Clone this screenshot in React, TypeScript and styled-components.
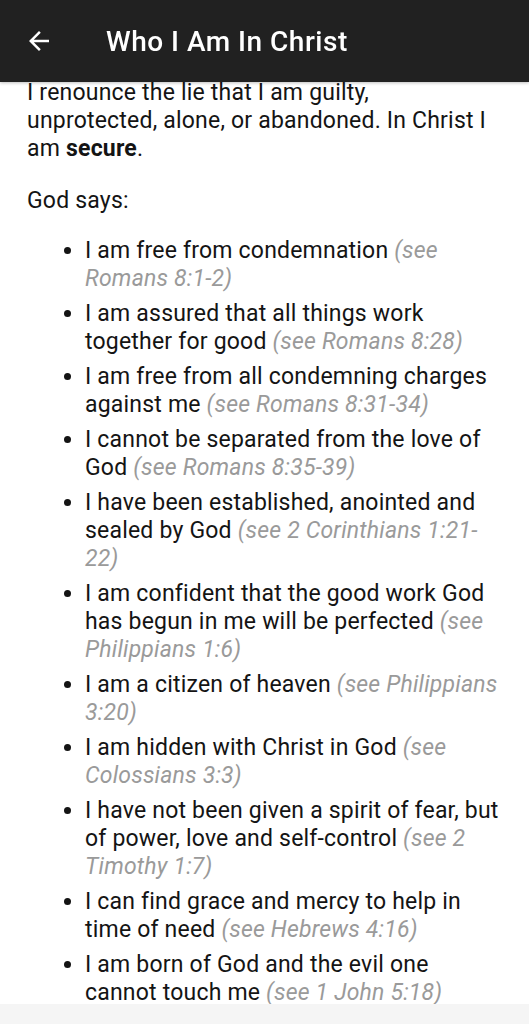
import React from 'react';
import styled, { createGlobalStyle } from 'styled-components';

const GlobalStyle = createGlobalStyle`
  html, body {
    margin: 0;
    padding: 0;
    background: #ffffff;
    font-family: Roboto, "Noto Sans", Arial, sans-serif;
  }
  body { overflow: hidden; }
`;

type Item = { text: string; cite: string };

const items: Item[] = [
  { text: 'I am free from condemnation', cite: 'see Romans 8:1-2' },
  { text: 'I am assured that all things work together for good', cite: 'see Romans 8:28' },
  { text: 'I am free from all condemning charges against me', cite: 'see Romans 8:31-34' },
  { text: 'I cannot be separated from the love of God', cite: 'see Romans 8:35-39' },
  { text: 'I have been established, anointed and sealed by God', cite: 'see 2 Corinthians 1:21-22' },
  { text: 'I am confident that the good work God has begun in me will be perfected', cite: 'see Philippians 1:6' },
  { text: 'I am a citizen of heaven', cite: 'see Philippians 3:20' },
  { text: 'I am hidden with Christ in God', cite: 'see Colossians 3:3' },
  { text: 'I have not been given a spirit of fear, but of power, love and self-control', cite: 'see 2 Timothy 1:7' },
  { text: 'I can find grace and mercy to help in time of need', cite: 'see Hebrews 4:16' },
  { text: 'I am born of God and the evil one cannot touch me', cite: 'see 1 John 5:18' },
];

export default function App() {
  return (
    <>
      <GlobalStyle />
      <AppBar>
        <BackButton aria-label="Back">
          <svg width="30" height="30" viewBox="0 0 24 24">
            <path d="M20 11H7.83l5.59-5.59L12 4l-8 8 8 8 1.41-1.41L7.83 13H20v-2z" fill="#ffffff" />
          </svg>
        </BackButton>
        <Title>Who I Am In Christ</Title>
      </AppBar>
      <Content>
        <Para $space={24}>
          I renounce the lie that I am guilty, unprotected, alone, or abandoned. In Christ I am <b>secure</b>.
        </Para>
        <Para $space={22}>God says:</Para>
        <List>
          {items.map((it) => (
            <ListItem key={it.text}>
              {it.text} <Cite>({it.cite})</Cite>
            </ListItem>
          ))}
        </List>
      </Content>
      <BottomBar />
    </>
  );
}

const AppBar = styled.header`
  position: fixed;
  top: 0;
  left: 0;
  right: 0;
  height: 82px;
  background: #212121;
  display: flex;
  align-items: center;
  padding: 0 0 0 24px;
  gap: 52px;
  box-shadow: 0 1px 3px rgba(0, 0, 0, 0.25);
  z-index: 2;
`;

const BackButton = styled.div`
  width: 30px;
  height: 30px;
  display: flex;
  align-items: center;
  svg { display: block; }
`;

const Title = styled.h1`
  margin: 0;
  color: #ffffff;
  font-size: 28px;
  font-weight: 500;
  letter-spacing: 0.5px;
`;

const Content = styled.main`
  padding: 79px 27px 0 27px;
  color: #141414;
  font-size: 23px;
  line-height: 28px;
  letter-spacing: 0.2px;
`;

const Para = styled.p<{ $space: number }>`
  margin: 0 0 ${(p) => p.$space}px 0;
  b { font-weight: 700; }
`;

const List = styled.ul`
  margin: 0;
  padding: 0 0 0 58px;
`;

const ListItem = styled.li`
  margin-bottom: 7px;
  &::marker { font-size: 23px; }
`;

const Cite = styled.i`
  color: #9a9a9a;
`;

const BottomBar = styled.div`
  position: fixed;
  left: 0;
  right: 0;
  bottom: 0;
  height: 20px;
  background: #f5f5f5;
`;
